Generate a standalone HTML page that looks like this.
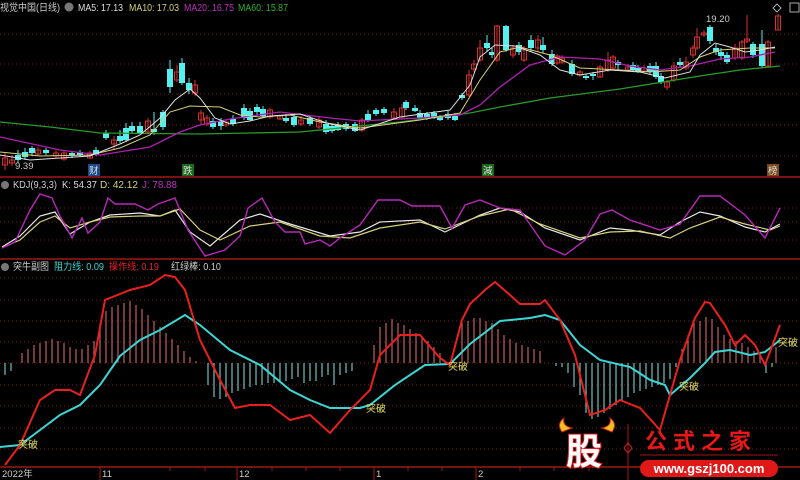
<!DOCTYPE html>
<html><head><meta charset="utf-8"><style>
html,body{margin:0;padding:0;background:#000;width:800px;height:480px;overflow:hidden}
svg{display:block}
text{font-family:"Liberation Sans","Noto Sans CJK SC",sans-serif}
</style></head><body>
<svg id="s" width="800" height="480" viewBox="0 0 800 480" xmlns="http://www.w3.org/2000/svg">
<g stroke="#7a1a1a" stroke-dasharray="1,3" stroke-width="1">
<line x1="0" y1="34" x2="800" y2="34"/><line x1="0" y1="64" x2="800" y2="64"/><line x1="0" y1="94" x2="800" y2="94"/><line x1="0" y1="125" x2="800" y2="125"/><line x1="0" y1="156" x2="800" y2="156"/>
<line x1="0" y1="208" x2="800" y2="208"/><line x1="0" y1="222" x2="800" y2="222"/><line x1="0" y1="240" x2="800" y2="240"/>
<line x1="0" y1="278" x2="800" y2="278"/><line x1="0" y1="300" x2="800" y2="300"/><line x1="0" y1="321" x2="800" y2="321"/><line x1="0" y1="342" x2="800" y2="342"/><line x1="0" y1="363" x2="800" y2="363"/><line x1="0" y1="385" x2="800" y2="385"/><line x1="0" y1="406" x2="800" y2="406"/><line x1="0" y1="428" x2="800" y2="428"/><line x1="0" y1="449" x2="800" y2="449"/>
</g>
<g stroke="#a01818" stroke-width="1.5"><line x1="0" y1="177" x2="800" y2="177"/><line x1="0" y1="259" x2="800" y2="259"/><line x1="0" y1="467" x2="800" y2="467"/></g>
<g stroke="#a01818"><line x1="100" y1="467" x2="100" y2="480"/><line x1="237" y1="467" x2="237" y2="480"/><line x1="374" y1="467" x2="374" y2="480"/><line x1="476" y1="467" x2="476" y2="480"/><line x1="554" y1="467" x2="554" y2="471"/><line x1="340" y1="467" x2="340" y2="471"/><line x1="170" y1="467" x2="170" y2="471"/><line x1="205" y1="467" x2="205" y2="471"/><line x1="272" y1="467" x2="272" y2="471"/><line x1="306" y1="467" x2="306" y2="471"/><line x1="408" y1="467" x2="408" y2="471"/><line x1="442" y1="467" x2="442" y2="471"/><line x1="520" y1="467" x2="520" y2="471"/><line x1="589" y1="467" x2="589" y2="471"/></g>
<g id="bars"></g>
<g id="candles"></g>
<g fill="none" stroke-width="1">
<polyline stroke="#2a9a2a" stroke-width="1.3" points="0,122 50,127 100,133 200,134 300,132 400,122 470,113 500,107 550,98 620,89 700,76 740,70 780,66"/>
<polyline stroke="#b020b0" stroke-width="1.3" points="0,137 60,150 100,155 150,147 180,132 200,125 230,119 280,112 330,118 360,121 420,118 460,115 480,105 500,87 530,65 560,57 600,59 630,66 660,70 690,66 720,59 750,57 775,52"/>
<polyline stroke="#d8d07a" points="0,152 40,156 90,155 120,148 150,135 170,112 190,106 220,107 240,115 260,117 290,115 320,122 360,128 420,120 460,113 480,80 500,52 520,47 550,55 580,68 620,70 650,72 680,70 700,57 720,50 750,48 775,48"/>
<polyline stroke="#e0e0e0" points="0,155 30,160 60,158 90,156 120,144 140,135 160,118 175,100 190,89 200,98 215,118 230,124 250,121 270,116 300,114 330,124 360,130 400,117 450,110 470,85 480,57 495,45 515,46 540,55 560,70 580,75 610,70 640,72 665,78 690,72 700,55 715,43 730,47 745,52 760,50 775,47"/>
</g>
<g fill="none" stroke-width="1.2">
<polyline stroke="#e8e8e8" points="2,247 20,236 40,216 55,212 70,234 90,222 110,215 140,213 160,216 175,210 190,232 210,246 240,220 260,214 290,224 330,236 360,232 380,222 420,220 445,232 480,215 500,208 520,212 545,228 580,240 610,228 630,230 660,235 680,222 700,212 720,216 745,227 765,232 780,224"/>
<polyline stroke="#d8d07a" points="2,248 20,240 40,222 55,216 70,228 90,222 110,217 140,216 160,216 180,209 200,230 220,240 250,226 280,222 320,236 350,238 380,228 420,222 445,229 480,216 510,209 540,224 580,238 610,232 640,231 670,238 690,228 720,217 745,224 770,230 780,226"/>
<polyline stroke="#b828b8" stroke-width="1.4" points="2,248 15,242 30,210 40,194 52,198 60,216 72,238 82,218 88,233 100,222 108,198 115,204 135,204 148,210 158,204 175,198 188,230 205,256 225,250 240,236 248,208 262,198 275,222 285,232 300,232 305,244 320,240 330,246 340,238 360,225 378,200 400,200 412,206 440,206 452,228 465,205 480,200 500,208 520,210 545,246 565,255 585,240 600,214 612,210 630,220 660,230 680,224 700,196 720,196 745,215 765,238 780,208"/>
</g>
<polyline fill="none" stroke="#3cd6d6" stroke-width="2" points="0,447 20,445 40,430 60,415 80,405 100,385 120,356 140,340 160,330 185,315 200,325 230,350 260,365 290,390 310,400 330,408 360,408 370,405 395,385 425,365 450,364 470,344 500,321 530,318 545,315 560,320 580,345 600,360 630,367 650,380 665,385 670,395 690,378 705,363 715,352 730,350 750,355 765,352 780,340"/>
<polyline fill="none" stroke="#e8201e" stroke-width="2" points="5,465 20,445 40,400 55,390 70,390 80,395 95,355 105,300 130,290 150,285 165,275 175,277 185,290 200,340 220,380 235,408 250,405 270,405 290,420 310,415 330,433 350,410 370,390 380,355 400,335 420,335 440,358 450,365 462,320 470,304 485,290 495,282 510,295 520,304 540,304 545,300 560,320 575,355 590,415 605,410 620,400 640,408 660,430 680,360 695,318 705,302 710,303 725,325 735,345 745,335 755,345 765,365 780,325"/>
<g fill="#e8e060" font-size="10">
<text x="18" y="448">突破</text><text x="366" y="412">突破</text><text x="448" y="370">突破</text><text x="679" y="390">突破</text><text x="778" y="346">突破</text>
</g>
<g font-size="9.5" fill="#ccc">
<text x="2" y="477">2022年</text><text x="102" y="477">11</text><text x="239" y="477">12</text><text x="376" y="477">1</text><text x="478" y="477">2</text>
<text x="15" y="169" fill="#ccc">9.39</text><text x="706" y="22" fill="#ccc">19.20</text>
</g>
<g font-size="9.5">
<rect x="88" y="164" width="12" height="12" fill="#1a4a8a"/><text x="89" y="174" fill="#ddd">财</text>
<rect x="182" y="164" width="12" height="12" fill="#1a6a1a"/><text x="183" y="174" fill="#ddd">跌</text>
<rect x="482" y="164" width="12" height="12" fill="#1a6a1a"/><text x="483" y="174" fill="#ddd">減</text>
<rect x="767" y="164" width="12" height="12" fill="#7a4a1a"/><text x="768" y="174" fill="#ddd">榜</text>
</g>
<g font-size="10">
<text x="0" y="11" fill="#ccc" textLength="60" lengthAdjust="spacingAndGlyphs">视觉中国(日线)</text><circle cx="69" cy="7" r="4.5" fill="#777"/>
<text x="78" y="11" fill="#ddd" textLength="45" lengthAdjust="spacingAndGlyphs">MA5: 17.13</text><text x="129" y="11" fill="#d8d07a" textLength="50" lengthAdjust="spacingAndGlyphs">MA10: 17.03</text><text x="184" y="11" fill="#c030c0" textLength="50" lengthAdjust="spacingAndGlyphs">MA20: 16.75</text><text x="238" y="11" fill="#30b030" textLength="50" lengthAdjust="spacingAndGlyphs">MA60: 15.87</text>
<circle cx="5" cy="185" r="4" fill="#777"/><text x="13" y="188" fill="#ccc" textLength="44" lengthAdjust="spacingAndGlyphs">KDJ(9,3,3)</text><text x="62" y="188" fill="#ddd" textLength="35" lengthAdjust="spacingAndGlyphs">K: 54.37</text><text x="100" y="188" fill="#d8d07a" textLength="38" lengthAdjust="spacingAndGlyphs">D: 42.12</text><text x="142" y="188" fill="#c030c0" textLength="35" lengthAdjust="spacingAndGlyphs">J: 78.88</text>
<circle cx="5" cy="267" r="4" fill="#777"/><text x="13" y="270" fill="#ccc" textLength="36" lengthAdjust="spacingAndGlyphs">突牛副图</text><text x="54" y="270" fill="#3cd6d6" textLength="50" lengthAdjust="spacingAndGlyphs">阻力线: 0.09</text><text x="109" y="270" fill="#e82020" textLength="50" lengthAdjust="spacingAndGlyphs">操作线: 0.19</text><text x="171" y="270" fill="#ccc" textLength="50" lengthAdjust="spacingAndGlyphs">红绿棒: 0.10</text>
</g>
<path d="M777,4 l4,4 -4,4 -4,-4z" fill="none" stroke="#aaa"/><rect x="790" y="3" width="9" height="9" fill="none" stroke="#aaa"/>
<!-- logo -->
<path d="M562,432 q-6,-8 2,-14 q-2,8 8,10z M612,432 q6,-8 -2,-14 q2,8 -8,10z" fill="#f0c020" stroke="#d02020"/>
<text x="566" y="464" font-size="36" font-weight="bold" fill="#fff" stroke="#e01818" stroke-width="2" paint-order="stroke" font-family="'Noto Sans CJK SC',sans-serif">股</text>
<line x1="628" y1="424" x2="628" y2="480" stroke="#a01818"/><path d="M628,443 l4,5 -4,5 -4,-5z" fill="none" stroke="#e02020"/>
<text x="645" y="449" font-size="22" font-weight="bold" fill="#e81818" letter-spacing="6" font-family="'Noto Serif CJK SC',serif">公式之家</text>
<line x1="640" y1="455" x2="778" y2="455" stroke="#a01818"/>
<rect x="640" y="460" width="138" height="17" rx="8.5" fill="#e01818"/>
<text x="709" y="473" font-size="13" font-weight="bold" fill="#fff" text-anchor="middle">www.gszj100.com</text>
</svg>
<script>
var ns="http://www.w3.org/2000/svg";
function el(p,t,a){var e=document.createElementNS(ns,t);for(var k in a)e.setAttribute(k,a[k]);p.appendChild(e);}
var b=document.getElementById('bars');
function bar(x,h){el(b,'line',{x1:x,y1:363,x2:x,y2:363-h,stroke:h>0?'#c06060':'#70c0c0','stroke-width':1.2});}
var pos=[[5,-12],[11,-8],[22,10],[28,14],[34,18],[40,20],[46,22],[52,24],[58,22],[64,20],[70,16],[76,14],[82,14],[88,18],[94,22],[100,40],[106,52],[112,56],[118,58],[124,60],[130,62],[136,58],[142,54],[148,48],[154,42],[160,36],[166,30],[172,24],[178,18],[184,12],[190,6],[196,2],[208,-22],[214,-34],[220,-36],[226,-34],[232,-30],[238,-28],[244,-26],[250,-24],[256,-22],[262,-22],[268,-20],[274,-20],[280,-18],[286,-18],[292,-16],[298,-14],[304,-20],[310,-18],[316,-18],[322,-14],[328,-12],[334,-22],[340,-12],[346,-10],[352,-8],[374,18],[380,36],[386,40],[392,44],[398,40],[404,38],[410,34],[416,30],[422,26],[428,22],[434,16],[440,10],[462,40],[468,42],[474,45],[480,45],[486,42],[492,40],[498,34],[504,28],[510,24],[516,20],[522,18],[528,16],[534,14],[540,12],[556,-3],[562,-4],[568,-10],[574,-24],[580,-32],[586,-50],[592,-56],[598,-54],[604,-50],[610,-46],[616,-42],[622,-38],[628,-34],[634,-30],[640,-28],[646,-26],[652,-24],[658,-22],[664,-20],[670,-16],[676,-4],[682,14],[688,28],[694,40],[700,42],[706,46],[712,44],[718,36],[724,28],[730,24],[736,22],[742,20],[748,16],[754,12],[760,8],[766,-10],[772,-4],[776,16]];
pos.forEach(function(p){bar(p[0],p[1]);});
var c=document.getElementById('candles');
var cs=[[5,158,165,152,170,0],[12,160,163,155,166,0],[18,155,160,150,163,1],[25,152,157,148,160,1],[32,148,153,146,156,1],[38,150,154,147,156,0],[46,150,153,148,155,1],[56,153,156,150,158,0],[64,153,159,150,161,0],[72,153,156,151,158,1],[80,152,155,150,157,1],[90,153,158,151,159,0],[96,150,155,147,156,1],[106,133,138,130,140,1],[114,140,144,136,150,0],[120,136,141,130,143,1],[126,128,140,123,142,1],[132,126,131,122,133,1],[140,126,133,122,134,1],[148,121,132,118,134,0],[154,129,132,112,135,1],[163,112,127,110,130,1],[170,69,87,60,93,1],[177,72,80,65,82,0],[182,63,83,58,85,1],[189,83,90,78,94,1],[195,85,93,80,96,0],[201,113,120,110,125,0],[207,118,124,115,126,0],[213,121,127,118,129,1],[221,121,126,118,130,1],[226,122,125,120,127,0],[233,119,124,115,126,1],[244,108,118,104,120,1],[250,111,120,108,121,1],[257,107,112,104,115,1],[263,109,116,106,118,1],[270,110,117,108,119,0],[280,116,119,115,120,0],[286,118,121,114,123,1],[294,117,125,114,127,1],[301,120,124,116,126,0],[310,118,124,116,126,1],[319,120,127,116,129,0],[326,124,132,120,134,1],[332,126,131,124,133,1],[338,125,130,122,131,1],[346,124,129,122,131,1],[355,124,131,122,132,1],[362,120,130,118,132,0],[368,114,120,110,122,1],[376,110,114,108,116,1],[384,109,113,107,115,1],[394,112,118,108,119,0],[402,108,117,104,119,0],[406,102,108,100,110,1],[415,108,111,105,112,1],[420,113,118,110,120,1],[427,114,118,112,120,1],[434,113,117,111,119,1],[440,117,120,115,121,1],[448,114,118,111,120,1],[455,116,120,113,121,1],[462,95,98,93,100,1],[469,75,95,70,97,0],[474,64,69,60,72,0],[480,48,60,40,62,0],[487,43,48,35,52,1],[492,52,55,48,58,1],[497,26,60,25,62,0],[506,26,50,25,52,1],[513,48,55,45,58,0],[519,45,52,42,55,1],[524,50,60,46,62,0],[531,40,48,35,52,1],[538,40,48,35,52,0],[543,45,50,37,53,1],[552,54,64,50,66,1],[557,56,63,54,65,0],[562,58,62,55,64,0],[572,64,74,60,76,1],[580,72,75,70,77,0],[586,76,78,74,80,1],[593,74,76,72,80,1],[600,67,77,65,78,0],[608,60,70,52,72,0],[613,57,68,55,70,0],[618,62,65,60,70,1],[628,67,70,64,72,0],[633,65,70,62,71,1],[638,68,72,65,73,1],[644,68,71,65,73,0],[650,66,72,63,74,1],[656,66,77,62,79,1],[661,76,82,73,84,1],[667,82,87,80,90,0],[674,66,80,62,82,0],[680,62,65,58,68,1],[686,62,68,57,70,0],[693,48,55,45,58,0],[697,37,48,28,50,0],[704,33,35,30,37,0],[710,27,41,25,44,1],[716,48,52,44,55,1],[721,52,56,48,60,1],[727,55,62,52,64,1],[735,48,58,44,60,0],[742,42,58,40,60,0],[747,39,41,15,43,0],[753,44,55,42,58,1],[762,44,66,30,68,1],[768,42,66,40,68,0],[778,16,30,14,30,0]];
cs.forEach(function(k){var x=k[0],col=k[5]?'#54f0f0':'#d83030';el(c,'line',{x1:x,y1:k[3],x2:x,y2:k[4],stroke:col});
if(k[5])el(c,'rect',{x:x-3,y:k[1],width:6,height:Math.max(1,k[2]-k[1]),fill:col});else el(c,'rect',{x:x-2.5,y:k[1],width:5,height:Math.max(1,k[2]-k[1]),fill:'none',stroke:col});});
</script>
</body></html>
